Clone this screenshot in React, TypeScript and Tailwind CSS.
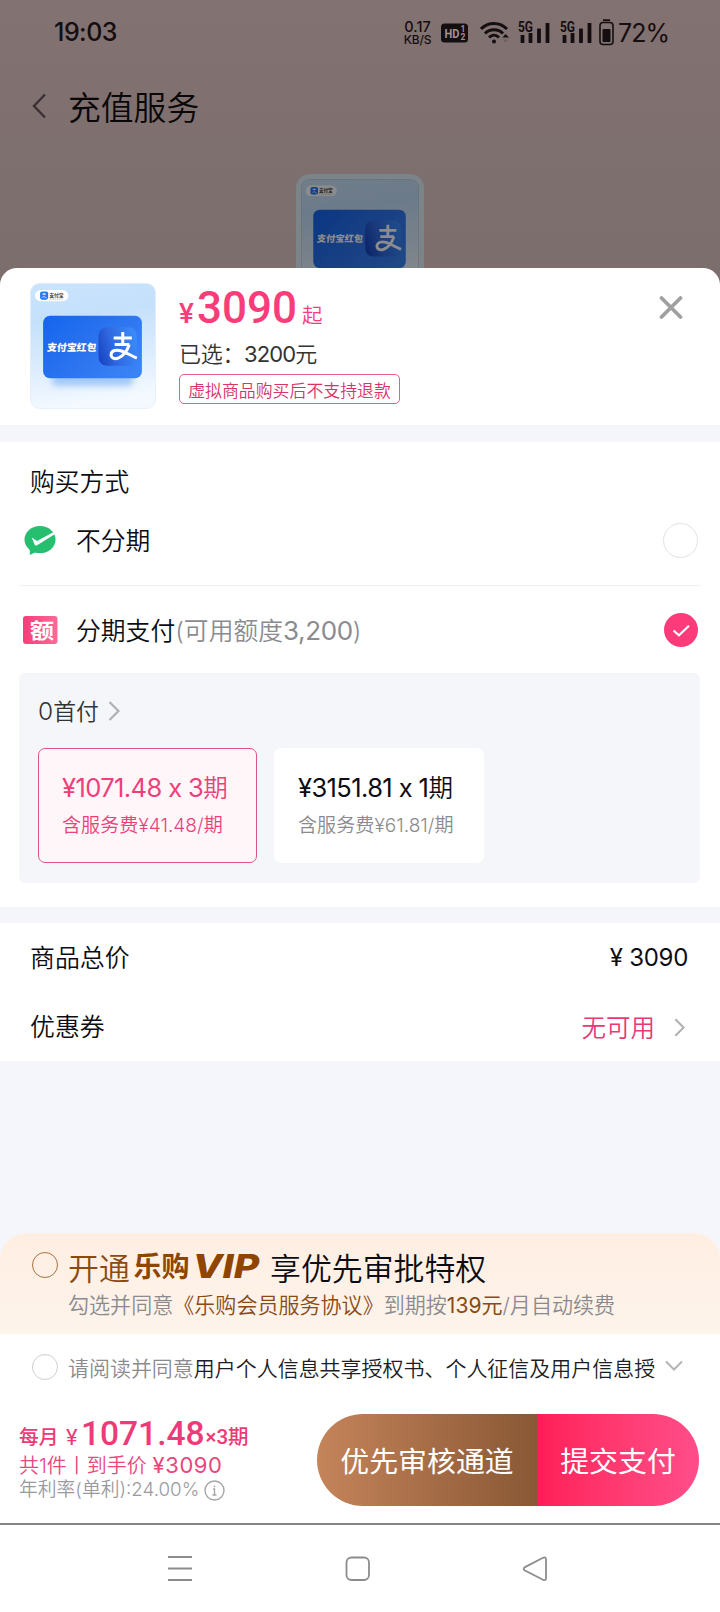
import { ReactNode } from 'react';
import clsx from 'clsx';

const cjk = "font-['Inter','Noto_Sans_CJK_SC',sans-serif]";
const roboto = "font-['Roboto','Noto_Sans_CJK_SC',sans-serif]";

const plans = [
  { price: '¥1071.48 x 3', fee: '含服务费¥41.48/期', active: true },
  { price: '¥3151.81 x 1', fee: '含服务费¥61.81/期', active: false },
];

function ProductArt({ className }: { className?: string }) {
  return (
    <svg className={className} viewBox="0 0 125 125">
      <defs>
        <linearGradient id="artBg" x1="0" y1="0" x2="0.15" y2="1">
          <stop offset="0" stopColor="#cbe4fd" />
          <stop offset="0.3" stopColor="#c4e0fb" />
          <stop offset="0.7" stopColor="#deedfd" />
          <stop offset="1" stopColor="#f3f9ff" />
        </linearGradient>
        <linearGradient id="artCard" x1="0" y1="0.2" x2="1" y2="0.8">
          <stop offset="0" stopColor="#1767ee" />
          <stop offset="0.5" stopColor="#2c74ef" />
          <stop offset="1" stopColor="#3a83f6" />
        </linearGradient>
        <linearGradient id="artTile" x1="0" y1="0.6" x2="1" y2="0.3">
          <stop offset="0" stopColor="#1b48c4" />
          <stop offset="0.35" stopColor="#2f68e0" />
          <stop offset="1" stopColor="#3b8bfa" />
        </linearGradient>
        <filter id="artBlur" x="-20%" y="-60%" width="140%" height="220%">
          <feGaussianBlur stdDeviation="3" />
        </filter>
      </defs>
      <rect x="0.500" y="0.500" width="124" height="124" rx="9" fill="url(#artBg)" stroke="#dfe9f3" strokeWidth="0.600" />
      <rect x="22" y="88" width="80" height="14" rx="4" fill="#a3c8f8" filter="url(#artBlur)" />
      {/* brand pill */}
      <rect x="5" y="7" width="33" height="11" rx="5.500" fill="#fff" />
      <rect x="10" y="8.500" width="8" height="8" rx="2" fill="#2477f2" />
      <path d="M12 11h4M14 9.800v2.400M12 14.500c1.200-2 3-.4 4.500.5" fill="none" stroke="#fff" strokeWidth="0.8" />
      <text x="19" y="13.800" fontSize="4.800" fontWeight="700" fill="#333" fontFamily="Noto Sans CJK SC">支付宝</text>
      <path d="M19.500 16h13" stroke="#888" strokeWidth="0.7" strokeDasharray="1 0.8" />
      {/* card */}
      <rect x="13" y="32.500" width="98" height="62" rx="7" fill="url(#artCard)" />
      <rect x="68" y="44" width="38" height="38" rx="8" fill="url(#artTile)" />
      <text x="0" y="0" transform="translate(16.500 67) skewX(-6)" fontSize="9.800" fontWeight="900" fill="#fff" textLength="49" fontFamily="Noto Sans CJK SC">支付宝红包</text>
      <path d="M83 54.500h18M92 48.500v12M84 61h14.500M98.500 61c-2 6-6 11.500-11 13.500-4 1.500-7.500-.5-7-4 .6-3.500 5-4.700 9.500-3.300 5.500 1.700 10 4.800 16 7.300" fill="none" stroke="#fff" strokeWidth="3" />
    </svg>
  );
}

function Signal() {
  return (
    <svg className="h-[24px] w-[32px] overflow-visible" viewBox="0 0 32 24">
      <text x="0" y="10.500" fontSize="14" fontWeight="700" fill="#140e10" fontFamily="Roboto" textLength="15" lengthAdjust="spacingAndGlyphs">5G</text>
      <path d="M4.500 14v8M12.500 12v10M21 7.500v14.500M29.500 2v20" stroke="#140e10" strokeWidth="3.800" strokeLinejoin="round" />
    </svg>
  );
}

function StatusBar() {
  return (
    <div className="flex h-[65px] items-center justify-between pl-[54px] pr-[51px] text-[#140e10]">
      <span className="font-['Inter'] text-[25px] font-medium tracking-[-0.500px]">19:03</span>
      <div className="flex items-center">
        <div className="mr-[9px] flex w-[29px] flex-col items-center whitespace-nowrap font-['Inter'] font-medium">
          <span className="text-[14.500px] leading-[15px]">0.17</span>
          <span className="text-[12px] leading-[12px] tracking-[-0.200px]">KB/S</span>
        </div>
        <svg className="mr-[12px] h-[20px] w-[27px] overflow-visible" viewBox="0 0 27 20">
          <rect width="27" height="19" y="0.500" rx="3.500" fill="#140e10" />
          <text x="3.500" y="14.500" fontSize="13" fontWeight="700" fill="#a09293" fontFamily="Roboto" textLength="15" lengthAdjust="spacingAndGlyphs">HD</text>
          <text x="19.500" y="9" fontSize="8.500" fontWeight="700" fill="#a09293" fontFamily="Roboto">1</text>
          <text x="19.500" y="17" fontSize="8.500" fontWeight="700" fill="#a09293" fontFamily="Roboto">2</text>
        </svg>
        <svg className="mr-[8px] h-[24px] w-[30px]" viewBox="0 0 30 24" fill="none" stroke="#140e10" strokeWidth="3">
          <path d="M1 8c7-7.500 19-7.500 26 0M5 12.500c5-5 13-5 18 0M9 16.500c3-3 7-3 10 0" />
          <circle cx="14" cy="20.500" r="2" fill="#140e10" stroke="none" />
          <path d="M22.500 16.500l3-3.500 3.500 3.500z" fill="#140e10" stroke="none" />
          <path d="M22.500 18.500l3 3 3-3z" fill="#6c5e60" stroke="none" />
        </svg>
        <div className="mr-[10px]"><Signal /></div>
        <div className="mr-[7px]"><Signal /></div>
        <svg className="mr-[4px] h-[27px] w-[15px]" viewBox="0 0 15 27">
          <path d="M4 1.200h7" stroke="#140e10" strokeWidth="1.800" />
          <rect x="1" y="3.500" width="13" height="22" rx="3" fill="none" stroke="#140e10" strokeWidth="1.600" />
          <rect x="3.500" y="10" width="8" height="13" rx="1" fill="#140e10" />
        </svg>
        <span className="font-['Inter'] text-[25px] leading-[28px] tracking-[-1px]">72%</span>
      </div>
    </div>
  );
}

function Chevron({ className }: { className?: string }) {
  return (
    <svg className={className} viewBox="0 0 12 20" fill="none" stroke="#b0b0b4" strokeWidth="2.200">
      <path d="M1.500 1l9 9-9 9" />
    </svg>
  );
}

function Line({ className, children }: { className?: string; children: ReactNode }) {
  return <div className={clsx('whitespace-nowrap', className)}>{children}</div>;
}

function Header() {
  return (
    <div className="relative flex h-[157px] gap-[23px] rounded-t-[17px] bg-white pl-[30px] pt-[15px]">
      <ProductArt className="h-[126px] w-[126px] shrink-0" />
      <div className="flex flex-col">
        <div className={`flex h-[49px] items-baseline whitespace-nowrap pt-[2px] text-[#f83d7a] ${roboto}`}>
          <span className="w-[18px] text-[28px] font-medium">¥</span>
          <span className="text-[44px] font-medium leading-[47px]">3090</span>
          <span className="ml-[5px] text-[20.500px] font-[350]">起</span>
        </div>
        <Line className="mt-[7px] h-[30px] text-[22px] font-[350] leading-[30px] tracking-[-0.300px] text-[#333]">
          已选：<span className="font-normal tracking-[-0.900px]">3200</span>元
        </Line>
        <div className="mt-[5px] flex h-[30px] w-[221px] items-center justify-center whitespace-nowrap rounded-[5px] border border-[#e0608f] pt-[5px] text-[16.900px] font-[350] text-[#d9336c]">
          虚拟商品购买后不支持退款
        </div>
      </div>
      <svg className="absolute right-[37px] top-[28px] h-[23px] w-[24px]" viewBox="0 0 24 23" stroke="#a0a0a0" strokeWidth="3.800" strokeLinecap="round">
        <path d="M2.500 2l19 19M21.500 2l-19 19" />
      </svg>
    </div>
  );
}

function PayMethods() {
  return (
    <div className="h-[465px] bg-white px-[19px] pt-[23px]">
      <Line className="pl-[11px] text-[24.800px] font-[350] leading-[34px] text-[#0c0d14]">购买方式</Line>
      <div className="mt-[10px] flex h-[62px] items-center pl-[5px]">
        <svg className="h-[31px] w-[33px]" viewBox="0 0 34 31">
          <ellipse cx="16.500" cy="14.500" rx="16" ry="14" fill="#26bf70" />
          <path d="M6 22v8.500l8-4z" fill="#26bf70" />
          <path d="M8 12.500l5.500 3.500L31 6.500l1 2.300L13.500 20.500c-1.200.6-2 .2-2.600-1z" fill="#fff" />
        </svg>
        <Line className="ml-[19px] flex-1 pt-[3px] text-[24.800px] font-[350] text-[#0c0d14]">不分期</Line>
        <span className="mr-[3px] h-[35px] w-[35px] rounded-full border-[1.500px] border-[#e3e3e3]" />
      </div>
      <div className="mt-[14px] h-px bg-[#f1f1f3]" />
      <div className="flex h-[87px] items-center pl-[4px]">
        <svg className="h-[28px] w-[35px] overflow-visible" viewBox="0 0 35 28">
          <defs>
            <linearGradient id="quota" x1="0" y1="0" x2="1" y2="0">
              <stop offset="0" stopColor="#f83d79" />
              <stop offset="1" stopColor="#fb6a99" />
            </linearGradient>
          </defs>
          <rect width="34.500" height="28" rx="3" fill="url(#quota)" />
          <text x="7" y="21.500" fontSize="21" fontWeight="700" fill="#fff" fontFamily="Noto Sans CJK SC" textLength="24" lengthAdjust="spacingAndGlyphs">额</text>
        </svg>
        <Line className="ml-[18px] flex-1 pt-[2px] text-[24.800px] font-[350] text-[#0c0d14]">
          分期支付<span className="text-[#8b8b8f]">(可用额度<span className="text-[26px] font-normal tracking-[-0.400px]">3,200</span>)</span>
        </Line>
        <svg className="mr-[3px] h-[34px] w-[34px]" viewBox="0 0 34 34">
          <circle cx="17" cy="17" r="17" fill="#fd3a7a" />
          <path d="M9.500 17.500l5.500 4.800 10-9.500" fill="none" stroke="#fff" strokeWidth="2.200" />
        </svg>
      </div>

      <div className="h-[210px] w-[681px] rounded-[6px] bg-[#f5f6fa] px-[19px] pt-[21px]">
        <div className="flex h-[34px] items-center">
          <Line className="text-[22.800px] font-[350] text-[#333]"><span className="text-[24.500px]">0</span>首付</Line>
          <Chevron className="ml-[9px] h-[20px] w-[12px]" />
        </div>
        <div className="mt-[20px] flex gap-[17px]">
          {plans.map((plan) => (
            <div
              key={plan.price}
              className={clsx('h-[115px] rounded-[7px] border pl-[23px] pt-[22px] font-[350]', {
                'w-[219px] border-[#d9558a] bg-[#fff6fa] text-[#ee3f7a]': plan.active,
                'w-[210px] border-white bg-white text-[#0c0d14]': !plan.active,
              })}
            >
              <Line className="text-[24.500px] leading-[34px]">
                <span className="text-[25.500px] font-normal tracking-[-0.600px]">{plan.price}</span>期
              </Line>
              <Line className={clsx('mt-[6px] text-[19.100px] leading-[28px]', !plan.active && 'text-[#8b8b8f]')}>{plan.fee}</Line>
            </div>
          ))}
        </div>
      </div>
    </div>
  );
}

function Totals() {
  return (
    <div className="h-[138px] bg-white pl-[30px] pr-[32px] text-[24.900px] font-[350] text-[#0c0d14]">
      <div className="flex h-[70px] items-center justify-between">
        <Line className="pt-[2px]">商品总价</Line>
        <Line className="text-[24px] font-normal tracking-[-0.300px]">¥ 3090</Line>
      </div>
      <div className="flex h-[68px] items-center">
        <Line className="flex-1 pt-[2px]">优惠券</Line>
        <Line className="mr-[19px] pt-[2px] text-[24.500px] text-[#e63a75]">无可用</Line>
        <Chevron className="mr-[3px] h-[19px] w-[11px]" />
      </div>
    </div>
  );
}

function VipBanner() {
  return (
    <div className="flex h-[101px] rounded-t-[26px] bg-linear-to-b from-[#ffeee2] to-[#fdf4eb] pl-[32px] pt-[16px]">
      <span className="mt-[3px] h-[26px] w-[26px] shrink-0 rounded-full border-[1.500px] border-[#a8703f]" />
      <div className="ml-[10px] whitespace-nowrap font-[350]">
        <div className="flex h-[39px] items-center pt-[1px] text-[30.900px] leading-[38px]">
          <span className="w-[65px] text-[#8a4a12]">开通</span>
          <svg className="h-[38px] w-[130px] overflow-visible" viewBox="0 0 130 38" fill="#8f4500">
            <text x="0.500" y="27" fontSize="28" fontWeight="700" fontFamily="Noto Sans CJK SC" textLength="56">乐购</text>
            <text x="0" y="0" transform="translate(59.500 27.500) scale(1.320 1)" fontSize="33" fontWeight="800" fontStyle="italic" fontFamily="Inter" textLength="50.500" lengthAdjust="spacingAndGlyphs">VIP</text>
          </svg>
          <span className="ml-[7px] text-[#0c0d14]">享优先审批特权</span>
        </div>
        <div className="mt-[4px] text-[21.050px] leading-[28px] text-[#8b8b8f]">
          勾选并同意<span className="text-[#8a4a12]">《乐购会员服务协议》</span>到期按
          <span className="font-normal text-[#8a4a12]">139元</span>/月自动续费
        </div>
      </div>
    </div>
  );
}

function Agreement() {
  return (
    <div className="flex h-[66px] items-center pl-[32px]">
      <span className="h-[26px] w-[26px] shrink-0 rounded-full border-[1.500px] border-[#cfcfd2]" />
      <Line className="ml-[10px] pt-[3px] text-[20.980px] font-[350] text-[#1c1d26]">
        <span className="text-[#8b8b8f]">请阅读并同意</span>用户个人信息共享授权书、个人征信及用户信息授
      </Line>
      <svg className="ml-[10px] mt-[-2px] h-[12px] w-[18px]" viewBox="0 0 18 12" fill="none" stroke="#b4b4b8" strokeWidth="2">
        <path d="M1 1.500l8 8 8-8" />
      </svg>
    </div>
  );
}

function PayBar() {
  return (
    <div className="flex h-[123px] justify-between pl-[19px] pr-[21px] pt-[14px]">
      <div className="whitespace-nowrap pt-[2px] font-[350]">
        <div className={`flex h-[36px] items-baseline text-[#ee3a76] ${roboto}`}>
          <span className="relative top-[-1px] w-[47px] text-[19.800px] font-medium">每月</span>
          <span className="w-[15px] text-[22px] font-normal">¥</span>
          <span className="text-[33.500px] font-medium leading-[36px]">1071.48</span>
          <span className="relative top-[-1px] ml-px text-[20.500px] font-medium">×3期</span>
        </div>
        <div className="mt-[-1px] text-[20px] leading-[28px] text-[#e8467d]">
          共1件丨到手价 <span className="text-[22px] font-normal tracking-[0.600px]">¥3090</span>
        </div>
        <div className="mt-[-4px] flex items-center text-[18.800px] leading-[28px] text-[#9a9a9e]">
          年利率(单利):24.00%
          <svg className="ml-[5px] h-[21px] w-[21px]" viewBox="0 0 21 21" fill="none" stroke="#a6a6aa" strokeWidth="1.400">
            <circle cx="10.500" cy="10.500" r="9.500" />
            <path d="M10.500 5.500v1.800M9 9h1.500v6M8.500 15h4" />
          </svg>
        </div>
      </div>
      <div className="flex h-[92px] w-[382px] overflow-hidden rounded-full text-[28.900px] leading-[95px] text-white">
        <button className="w-[220px] bg-linear-to-r from-[#c5845a] to-[#895835]">优先审核通道</button>
        <button className="w-[162px] bg-linear-to-r from-[#ff1c57] to-[#ff4d8a]">提交支付</button>
      </div>
    </div>
  );
}

function SystemNav() {
  return (
    <div className="flex h-[89px] items-center border-t-2 border-[#858585] bg-white pl-[167px]">
      <svg className="h-[28px] w-[400px]" viewBox="0 0 400 28" fill="none" stroke="#8c8c8c" strokeWidth="1.800">
        <path d="M1 2h24M1 13.500h24M1 25h24" />
        <rect x="179.500" y="2.500" width="22.500" height="22.500" rx="5" />
        <path d="M357.500 12.400l18.500-9.600q3-1.200 3 1.500v19q0 2.700-3 1.500l-18.500-9.600q-1.600-1.400 0-2.800z" />
      </svg>
    </div>
  );
}

export default function App() {
  return (
    <div className={`flex h-[1612px] w-[720px] flex-col overflow-hidden bg-[#7c6e6d] ${cjk}`}>
      <div className="relative h-[268px] shrink-0 bg-linear-to-b from-[#827272] to-[#7c6e6d]">
        <StatusBar />
        <div className="flex h-[85px] items-center pl-[32px]">
          <svg className="mt-[-3px] h-[26px] w-[14px]" viewBox="0 0 14 26" fill="none" stroke="#3b3035" strokeWidth="2.400">
            <path d="M13 1.500L2 13l11 11.500" />
          </svg>
          <span className="ml-[22px] pt-[2px] text-[32.800px] font-[350] text-[#0a0709]">充值服务</span>
        </div>
        <div className="mx-auto h-[94px] w-[128px] translate-y-[24px] overflow-hidden rounded-t-[14px] bg-[#7b8489] p-[5px] pb-0">
          <div className="relative h-[89px] overflow-hidden rounded-t-[9px]">
            <ProductArt className="h-[118px] w-[118px]" />
            <div className="absolute inset-0 bg-black/45" />
          </div>
        </div>
      </div>

      <div className="flex flex-1 flex-col rounded-t-[17px] bg-linear-to-b from-transparent from-[20px] to-[#f5f6fb] to-[20px]">
        <Header />
        <div className="h-[17px]" />
        <PayMethods />
        <div className="h-[16px]" />
        <Totals />
        <div className="flex-1" />
        <VipBanner />
        <div className="bg-white">
          <Agreement />
          <PayBar />
        </div>
        <SystemNav />
      </div>
    </div>
  );
}
